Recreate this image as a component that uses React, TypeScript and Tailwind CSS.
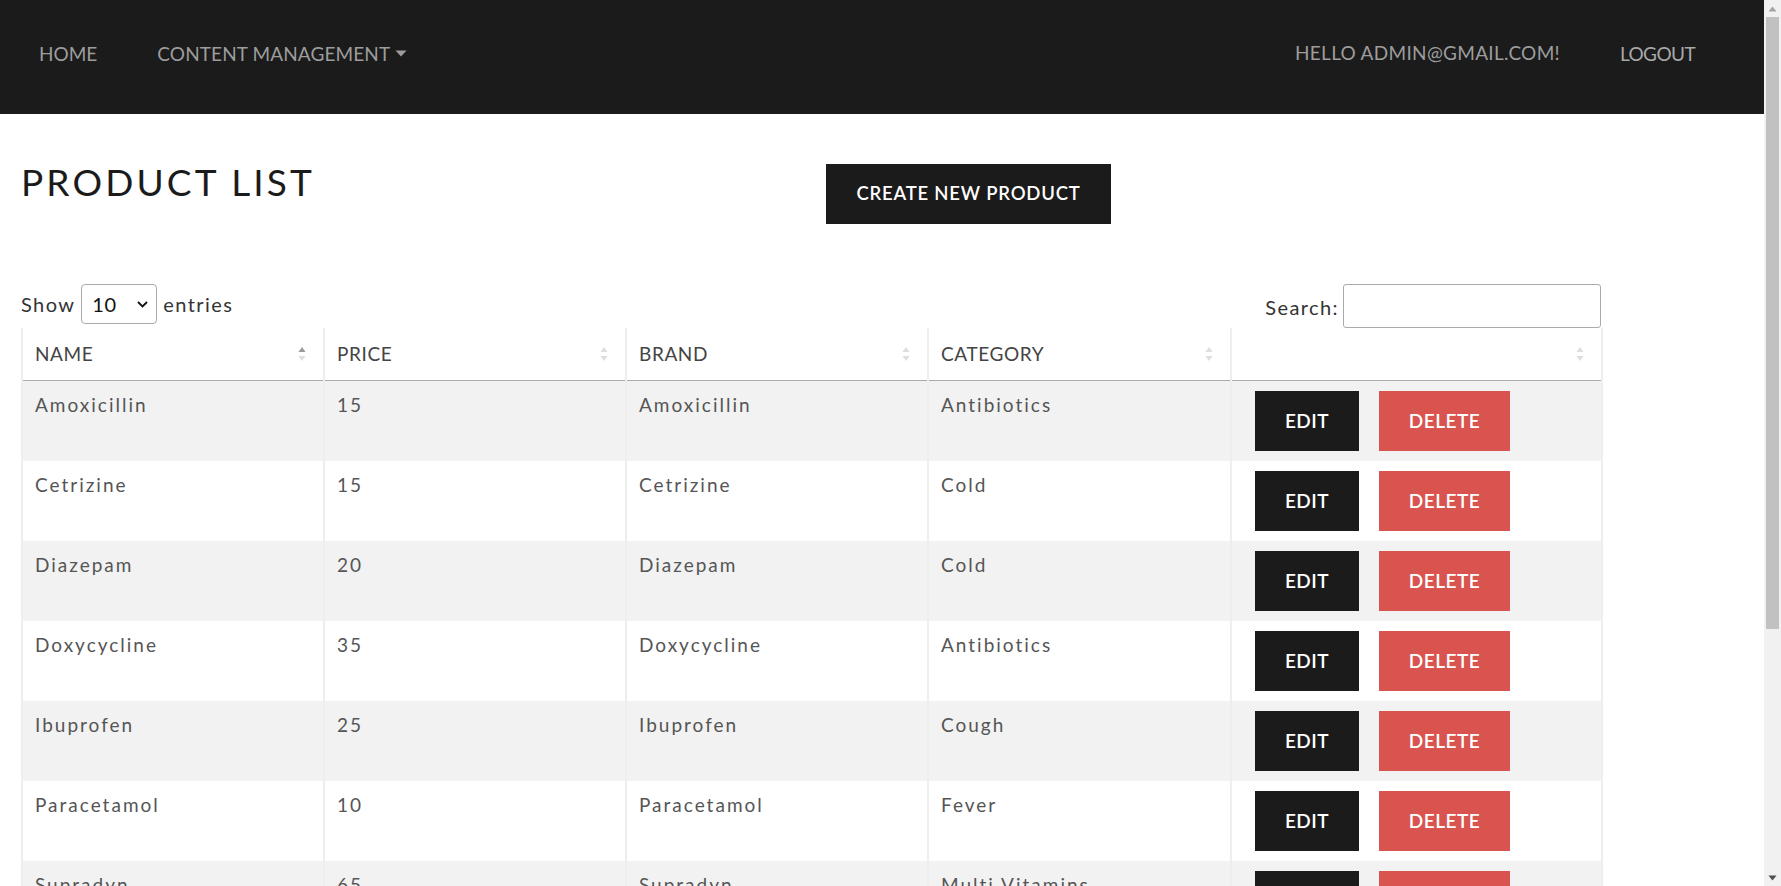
import React from "react";

const rows = [
  ["Amoxicillin", "15", "Amoxicillin", "Antibiotics"],
  ["Cetrizine", "15", "Cetrizine", "Cold"],
  ["Diazepam", "20", "Diazepam", "Cold"],
  ["Doxycycline", "35", "Doxycycline", "Antibiotics"],
  ["Ibuprofen", "25", "Ibuprofen", "Cough"],
  ["Paracetamol", "10", "Paracetamol", "Fever"],
  ["Supradyn", "65", "Supradyn", "Multi Vitamins"],
  ["Vitamin C", "30", "Vitamin C", "Multi Vitamins"],
];

function SortIcon({ active }: { active?: boolean }) {
  return (
    <svg width="8" height="16" viewBox="0 0 8 16" className="shrink-0">
      <path d="M4 1 L7.5 6 L0.5 6 Z" fill={active ? "#9a9a9a" : "#dedede"} />
      <path d="M4 15 L7.5 10 L0.5 10 Z" fill="#dedede" />
    </svg>
  );
}

function Scrollbar() {
  return (
    <div className="w-[17px] h-[886px] shrink-0 bg-[#f1f1f1] flex flex-col">
      <div className="h-[17px] flex items-center justify-center">
        <svg width="9" height="6" viewBox="0 0 9 6">
          <path d="M4.5 0.5 L8.5 5.5 L0.5 5.5 Z" fill="#a3a3a3" />
        </svg>
      </div>
      <div className="flex-1 px-[2px]">
        <div className="h-[612px] bg-[#c1c1c1]" />
      </div>
      <div className="h-[17px] flex items-center justify-center">
        <svg width="9" height="6" viewBox="0 0 9 6">
          <path d="M0.5 0.5 L8.5 0.5 L4.5 5.5 Z" fill="#505050" />
        </svg>
      </div>
    </div>
  );
}

export default function App() {
  const font = { fontFamily: "Lato, 'Open Sans', sans-serif" };
  return (
    <div className="h-[886px] overflow-hidden bg-white flex" style={font}>
      <div className="flex-1 min-w-0">
        <nav className="h-[114px] bg-[#1b1b1b] flex items-start justify-between pt-[43px] pl-[39px] pr-[69px] text-[19px] leading-[1.2] text-[#9d9d9d]">
          <div className="flex items-center">
            <span>HOME</span>
            <span className="ml-[60px] flex items-center tracking-[0.1px]">
              CONTENT MANAGEMENT
              <svg width="12" height="7" viewBox="0 0 12 7" className="ml-[5px] mt-[-2px]">
                <path d="M0.5 0.5 L11.5 0.5 L6 6.5 Z" fill="#9d9d9d" />
              </svg>
            </span>
          </div>
          <div className="flex items-center">
            <span className="mt-[-2px] tracking-[0.3px]">HELLO ADMIN@GMAIL.COM!</span>
            <span className="ml-[60px] text-[#a8a8a8] tracking-[-0.6px]">LOGOUT</span>
          </div>
        </nav>

        <div className="w-[1580px] ml-[21px] pb-[40px]">
          <div className="flex items-start mt-[46px]">
            <h1 className="w-[805px] text-[37px] leading-[1.2] tracking-[0.085em] text-[#1b1b1b] font-normal">
              PRODUCT LIST
            </h1>
            <button className="mt-[4px] h-[60px] w-[285px] bg-[#1b1b1b] text-white text-[18.5px] font-semibold tracking-[0.8px]">
              CREATE NEW PRODUCT
            </button>
          </div>

          <div className="flex items-start justify-between mt-[60px] text-[20px] text-[#333] tracking-[1.4px]">
            <div className="flex items-center h-[40px]">
              <span>Show</span>
              <div className="ml-[6px] h-[40px] w-[76px] border border-[#aaa] rounded-[4px] flex items-center justify-between pl-[10px] pr-[8px] text-[#111] tracking-[0.5px]">
                <span>10</span>
                <svg width="11" height="7" viewBox="0 0 11 7">
                  <path d="M1 1 L5.5 5.5 L10 1" stroke="#111" strokeWidth="1.8" fill="none" />
                </svg>
              </div>
              <span className="ml-[6px]">entries</span>
            </div>
            <div className="flex items-center h-[44px]">
              <span className="mt-[2px]">Search:</span>
              <div className="ml-[4px] h-[44px] w-[258px] border border-[#aaa] rounded-[3px] bg-white" />
            </div>
          </div>

          <table className="w-[1580px] table-fixed border-collapse text-[19px] text-[#555]">
            <colgroup>
              <col className="w-[302px]" />
              <col className="w-[302px]" />
              <col className="w-[302px]" />
              <col className="w-[303px]" />
              <col className="w-[371px]" />
            </colgroup>
            <thead>
              <tr className="border-b border-[#aaa]">
                {["NAME", "PRICE", "BRAND", "CATEGORY", ""].map((h, i) => (
                  <th
                    key={i}
                    className="border-x-2 border-[#eeeeee] pl-[12px] pr-[17px] pt-[12px] pb-[12px] text-left font-normal text-[#444] leading-[1.5] tracking-[0.6px]"
                  >
                    <div className="flex items-center justify-between h-[28px]">
                      <span>{h}</span>
                      <SortIcon active={i === 0} />
                    </div>
                  </th>
                ))}
              </tr>
            </thead>
            <tbody>
              {rows.map((r, i) => (
                <tr key={i} className={i % 2 === 0 ? "bg-[#f2f2f2]" : "bg-white"}>
                  {r.map((c, j) => (
                    <td
                      key={j}
                      className="border-x-2 border-[#eeeeee] align-top pl-[12px] pr-[12px] py-[10px] leading-[1.5] tracking-[2px]"
                    >
                      {c}
                    </td>
                  ))}
                  <td className="border-x-2 border-[#eeeeee] align-top pl-[23px] pt-[10px] pb-[10px]">
                    <div className="flex gap-[20px]">
                      <button className="h-[60px] w-[104px] bg-[#1b1b1b] text-white text-[19px] font-semibold tracking-[0.5px]">
                        EDIT
                      </button>
                      <button className="h-[60px] w-[131px] bg-[#d9534f] text-white text-[19px] font-semibold tracking-[0.5px]">
                        DELETE
                      </button>
                    </div>
                  </td>
                </tr>
              ))}
            </tbody>
          </table>
        </div>
      </div>
      <Scrollbar />
    </div>
  );
}
